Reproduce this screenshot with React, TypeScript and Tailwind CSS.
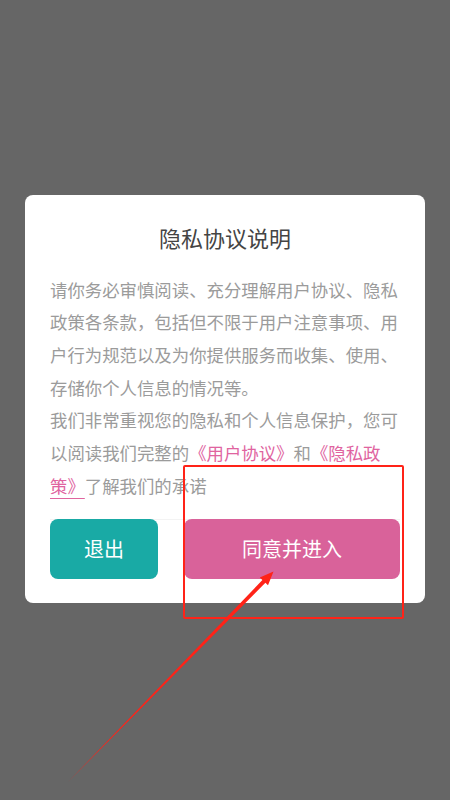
import React from "react";

export default function App() {
  const font = { fontFamily: '"Noto Sans CJK SC", "Noto Sans", sans-serif' };
  return (
    <div
      className="relative w-[450px] h-[800px] bg-[#666666] flex justify-center pt-[195px] overflow-hidden"
      style={font}
    >
      <div className="w-[400px] h-[408px] bg-white rounded-[8px] px-[25px] pt-[26px] flex flex-col">
        <h1 className="text-center text-[22px] leading-[32px] text-[#444444] font-normal">
          隐私协议说明
        </h1>
        <div className="mt-[20.6px] w-[350px] text-[17.4px] leading-[32.7px] text-[#9b9b9b]">
          <p>
            请你务必审慎阅读、充分理解用户协议、隐私政策各条款，包括但不限于用户注意事项、用户行为规范以及为你提供服务而收集、使用、存储你个人信息的情况等。
          </p>
          <p>
            我们非常重视您的隐私和个人信息保护，您可以阅读我们完整的
            <a className="text-[#e0649f] underline underline-offset-[5px] decoration-[1px]">《用户协议》</a>
            和
            <a className="text-[#e0649f] underline underline-offset-[5px] decoration-[1px]">《隐私政策》</a>
            了解我们的承诺
          </p>
        </div>
        <div className="mt-[16.5px] flex border-t border-[#f3f3f3] -mx-[0px]">
          <button className="w-[108px] h-[60px] rounded-[8px] bg-[#19aaa5] text-white text-[20px] leading-none -mt-px">
            退出
          </button>
          <button className="flex-1 ml-[26px] h-[60px] rounded-[8px] bg-[#d9629a] text-white text-[20px] leading-none -mt-px">
            同意并进入
          </button>
        </div>
      </div>

      {/* annotation overlay */}
      <div className="absolute left-[183px] top-[465px] w-[221px] h-[154px] border-2 border-[#ff2318] rounded-[2px] pointer-events-none" />
      <svg
        className="absolute left-0 top-0 pointer-events-none"
        width="450"
        height="800"
        viewBox="0 0 450 800"
      >
        <polygon
          points="68,782 262.4,580.1 259.8,577.6 273.5,571.5 268,585.3 265.4,582.8"
          fill="#ff2318"
        />
      </svg>
    </div>
  );
}
